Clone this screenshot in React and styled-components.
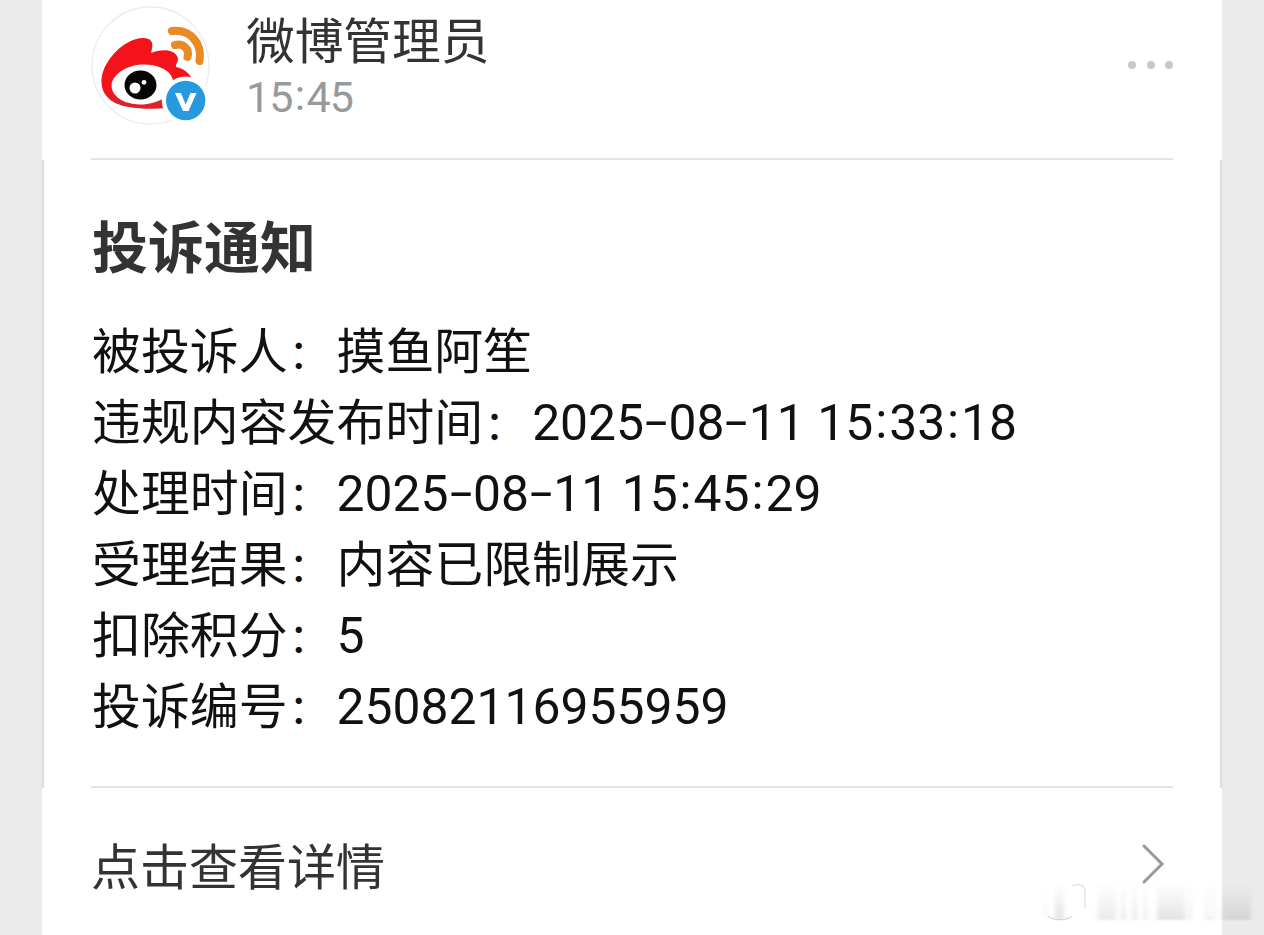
import React from 'react';
import styled, { createGlobalStyle } from 'styled-components';

const colors = {
  page: '#ebebeb',
  white: '#fff',
  text: '#111',
  title: '#333',
  grey: '#999',
  line: '#e5e5e5',
};

const complaint = [
  { label: '被投诉人', value: '摸鱼阿笙' },
  { label: '违规内容发布时间', value: '2025-08-11 15:33:18' },
  { label: '处理时间', value: '2025-08-11 15:45:29' },
  { label: '受理结果', value: '内容已限制展示' },
  { label: '扣除积分', value: '5' },
  { label: '投诉编号', value: '25082116955959' },
];

const GlobalStyle = createGlobalStyle`
  * {
    box-sizing: border-box;
  }
  body {
    margin: 0;
    background-color: ${colors.page};
    font-family: Roboto, "Noto Sans CJK SC", sans-serif;
  }
`;

const Page = styled.div`
  position: relative;
  height: 935px;
  padding: 0 42px;
  overflow: hidden;
`;
const Card = styled.div`
  height: 935px;
  background-color: ${colors.white};
`;
const Header = styled.div`
  height: 160px;
  margin: 0 49px;
  padding-top: 6px;
  display: flex;
  align-items: flex-start;
  border-bottom: 2px solid ${colors.line};
`;
const AvatarIcon = styled.svg`
  width: 120px;
  height: 120px;
  flex: none;
`;
const Sender = styled.div`
  flex: 1;
  margin-left: 35px;
`;
const Name = styled.div`
  height: 66px;
  line-height: 74px;
  font-size: 48.7px;
  color: ${colors.title};
`;
const Time = styled.div`
  line-height: 50px;
  font-size: 43px;
  letter-spacing: -0.8px;
  color: ${colors.grey};
`;
const More = styled.div`
  display: flex;
  gap: 10.5px;
  margin-top: 55px;
`;
const Dot = styled.span`
  width: 8px;
  height: 8px;
  border-radius: 50%;
  background-color: #c8c8c8;
`;
const Content = styled.div`
  position: relative;
  height: 628px;
  padding: 49px 48px 0;
  border-left: 2px solid #dcdcdc;
  border-right: 2px solid #dcdcdc;
  &:after {
    content: '';
    position: absolute;
    left: 47px;
    right: 47px;
    bottom: 0;
    height: 2px;
    background-color: ${colors.line};
  }
`;
const Title = styled.h1`
  margin: 0 0 28px;
  line-height: 80px;
  font-size: 56px;
  font-weight: 700;
  color: ${colors.title};
`;
const Row = styled.div`
  height: 71px;
  display: flex;
  line-height: 71px;
  font-size: 48.9px;
  white-space: nowrap;
  color: ${colors.text};
`;
const LabelColon = styled.span`
  width: 49px;
  padding-left: 1px;
  font-size: 41px;
  transform: translateY(3px);
`;
const Digits = styled.span`
  font-size: 49.8px;
`;
const Dash = styled.span`
  display: inline-block;
  width: 0.49em;
  text-align: center;
  transform: translateY(-0.03em) scale(1.62, 0.95);
`;
const Colon = styled.span`
  display: inline-block;
  width: 0.32em;
  text-align: center;
  transform: translateY(-0.05em);
`;
const Space = styled.span`
  display: inline-block;
  width: 0.25em;
`;
const Footer = styled.div`
  height: 147px;
  padding: 5px 57px 0 49px;
  display: flex;
  align-items: center;
  justify-content: space-between;
`;
const Detail = styled.span`
  font-size: 49px;
  line-height: 70px;
  margin-top: 9px;
  color: ${colors.title};
`;
const Arrow = styled.svg`
  width: 24px;
  height: 42px;
`;
const Mark = styled.svg`
  position: absolute;
  left: 1040px;
  top: 878px;
  width: 224px;
  height: 50px;
`;

// dashes and colons sit at the middle of the digits
function Value({ children }) {
  return children.split(/([-: ])/).map((part, i) => {
    if (part === '-') return <Dash key={i}>-</Dash>;
    if (part === ':') return <Colon key={i}>:</Colon>;
    if (part === ' ') return <Space key={i}> </Space>;
    return <span key={i}>{part}</span>;
  });
}

function Avatar() {
  return (
    <AvatarIcon viewBox="0 0 120 120">
      <circle cx="59.5" cy="59.5" r="58.5" fill="#fff" stroke="#ececec" strokeWidth="1.3" />
      <path
        d="M10.5 76C10 62 22 45 36 37C45 32 56 30 60 35C63 39 60 44 60.5 47C67 44 81 42 86 50C89 55 84 58 85 61C91 62 97 66 100 71L75 102C44 104 11 101 10.5 76Z"
        fill="#f5131b"
      />
      <path d="M12 83C18 94 38 97 75 95V102C42 104 17 101 12 83Z" fill="#d9242c" />
      <ellipse cx="51.5" cy="78.5" rx="31" ry="20" transform="rotate(-4 51.5 78.5)" fill="#fff" />
      <ellipse cx="49.5" cy="79" rx="16" ry="14.5" fill="#050505" />
      <circle cx="44" cy="82" r="5.5" fill="#fff" />
      <circle cx="53" cy="76.3" r="2.4" fill="#fff" />
      <path d="M81 25C99 23 111.5 37 108.5 55" fill="none" stroke="#e98a24" strokeWidth="8" strokeLinecap="round" />
      <path d="M84 39C92 37 99 43 96.5 51" fill="none" stroke="#e98a24" strokeWidth="8" strokeLinecap="round" />
      <circle cx="94.7" cy="94.5" r="24" fill="#fff" />
      <circle cx="94.7" cy="94.5" r="19.7" fill="#2699df" />
      <path d="M84 87H90L94.7 98.5L99.5 87H105.5L97.5 105H92Z" fill="#fff" />
    </AvatarIcon>
  );
}

function Watermark() {
  return (
    <Mark viewBox="0 0 224 50">
      <defs>
        <linearGradient id="smear" x1="0" y1="0" x2="0" y2="1">
          <stop offset="0" stopColor="#aaa" stopOpacity="0" />
          <stop offset="1" stopColor="#999" stopOpacity="0.28" />
        </linearGradient>
        <linearGradient id="shine" x1="0" y1="0" x2="0" y2="1">
          <stop offset="0" stopColor="#fff" stopOpacity="0" />
          <stop offset="1" stopColor="#fff" stopOpacity="0.6" />
        </linearGradient>
        <filter id="soft" x="-10%" y="-10%" width="120%" height="120%">
          <feGaussianBlur stdDeviation="2 0.8" />
        </filter>
      </defs>
      <g fill="url(#smear)" filter="url(#soft)">
        <rect x="3" y="8" width="5" height="30" opacity="0.3" />
        <rect x="15" y="5" width="9" height="36" />
        <rect x="58" y="5" width="18" height="37" opacity="0.75" />
        <rect x="81" y="5" width="5" height="37" opacity="0.7" />
        <rect x="92" y="5" width="5" height="37" opacity="0.8" />
        <rect x="103" y="5" width="5" height="37" opacity="0.6" />
        <rect x="117" y="5" width="28" height="37" />
        <rect x="148" y="5" width="4" height="37" opacity="0.6" />
        <rect x="165" y="5" width="10" height="37" opacity="0.5" />
        <rect x="182" y="5" width="29" height="37" />
      </g>
      <rect x="167" y="10" width="6" height="28" fill="url(#shine)" />
      <path d="M8 38C12 43 28 43 32 38" fill="none" stroke="#ccc" strokeWidth="1" />
      <path d="M32 8C38 5 44 7 45 12V30" fill="none" stroke="#ddd" strokeWidth="1.2" />
    </Mark>
  );
}

export default function App() {
  return (
    <>
      <GlobalStyle />
      <Page>
        <Card>
          <Header>
            <Avatar />
            <Sender>
              <Name>微博管理员</Name>
              <Time><Value>15:45</Value></Time>
            </Sender>
            <More>
              <Dot />
              <Dot />
              <Dot />
            </More>
          </Header>
          <Content>
            <Title>投诉通知</Title>
            {complaint.map(item => (
              <Row key={item.label}>
                <span>{item.label}</span>
                <LabelColon>：</LabelColon>
                {/^\d/.test(item.value)
                  ? <Digits><Value>{item.value}</Value></Digits>
                  : <span>{item.value}</span>
                }
              </Row>
            ))}
          </Content>
          <Footer>
            <Detail>点击查看详情</Detail>
            <Arrow viewBox="0 0 24 42">
              <path d="M3 3L21 21L3 39" fill="none" stroke="#999" strokeWidth="3" strokeLinecap="round" />
            </Arrow>
          </Footer>
        </Card>
        <Watermark />
      </Page>
    </>
  );
}
